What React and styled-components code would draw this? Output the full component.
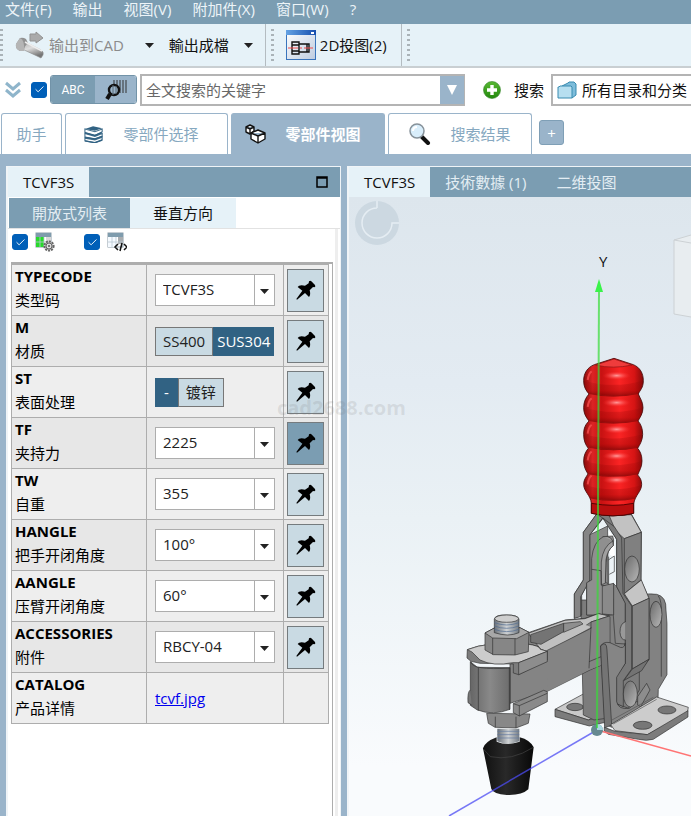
import React, { useState } from 'react';
import styled, { createGlobalStyle, css } from 'styled-components';
import { Check } from 'lucide-react';

const colors = {
  bar: '#7b9db2',
  frame: '#9ab4ca',
  pale: '#e6f2f8',
  button: '#c9dae3',
  selected: '#316283',
  line: '#adadad',
  tabText: '#86a8c0',
};

const GlobalStyle = createGlobalStyle`
  * {
    box-sizing: border-box;
  }
  body {
    margin: 0;
    background: ${colors.frame};
  }
  body, button, input, select {
    font-family: 'Open Sans', 'Noto Sans CJK SC', sans-serif;
    font-size: 15px;
    line-height: 20px;
  }
`;

const Page = styled.div`
  display: flex;
  flex-direction: column;
  min-height: 100vh;
  overflow: hidden;
  position: relative;
`;

const PlainButton = styled.button`
  display: flex;
  align-items: center;
  gap: 4px;
  border: none;
  background: none;
  padding: 0 ${props => props.$end || 0}px 0 0;
  color: ${props => props.$color || '#111'};
  white-space: nowrap;
  cursor: pointer;
`;

const MenuBar = styled.nav`
  display: flex;
  align-items: flex-start;
  gap: 21px;
  height: 24px;
  padding: 0 5px;
  background: ${colors.bar};
`;

const MenuItem = styled(PlainButton)`
  color: #edf4f8;
  line-height: 18px;
`;

const Toolbar = styled.div`
  display: flex;
  height: 44px;
  background: ${colors.pale};
  border-bottom: 2px solid #c9cfd2;
`;

const ToolGroup = styled.div`
  display: flex;
  align-items: center;
  gap: 15px;
  padding: 0 ${props => props.$end || 0}px 0 12px;
  border-right: 1px solid #b4bcc1;
`;

const Grip = styled.span`
  width: 3px;
  height: 34px;
  margin: 5px 0 0 ${props => props.$left || 0}px;
  background: repeating-linear-gradient(#aab3b8 0 2px, transparent 2px 5px);
`;

const SearchBar = styled.div`
  display: flex;
  align-items: center;
  height: 45px;
  padding: 0 0 2px 5px;
  background: #fff;
`;

const ExpandButton = styled(PlainButton)`
  margin-right: 10px;
`;

const Tick = styled.label`
  display: grid;
  place-items: center;
  position: relative;
  width: 16px;
  height: 16px;
  svg {
    position: absolute;
    pointer-events: none;
  }
`;

const TickInput = styled.input`
  appearance: none;
  width: 16px;
  height: 16px;
  margin: 0;
  border-radius: 3px;
  background: #fff;
  border: 1px solid #005fb8;
  &:checked {
    background: #005fb8;
  }
`;

const ModeSwitch = styled.div`
  display: flex;
  height: 29px;
  margin: 0 3px;
  border: 1px solid #7293a8;
  border-radius: 3px;
  overflow: hidden;
`;

const ModeButton = styled.button`
  display: grid;
  place-items: center;
  width: ${props => (props.$on ? 44 : 41)}px;
  border: none;
  padding: 0;
  background: ${props => (props.$on ? colors.bar : colors.frame)};
  color: #fff;
  font-family: Roboto, sans-serif;
  font-size: 12px;
`;

const SearchBox = styled.div`
  display: flex;
  flex: 1;
  min-width: 0;
  height: 32px;
  border: 2px solid #b4b4b4;
  border-right-width: 1px;
`;

const SearchInput = styled.input`
  flex: 1;
  min-width: 0;
  border: none;
  padding: 0 4px;
  outline: none;
  &::placeholder {
    color: #686868;
    opacity: 1;
  }
`;

const DropButton = styled.button`
  display: grid;
  place-items: center;
  width: 24px;
  border: none;
  padding: 0;
  background: ${colors.frame};
`;

const SearchActions = styled.div`
  display: flex;
  align-items: center;
  gap: 13px;
  padding: 0 7px 0 18px;
`;

const CatalogBox = styled.label`
  display: flex;
  align-items: center;
  gap: 5px;
  width: 140px;
  height: 32px;
  padding-left: 4px;
  border: 2px solid #b4b4b4;
  border-right: none;
`;

const CatalogSelect = styled.select`
  appearance: none;
  flex: 1;
  min-width: 0;
  border: none;
  background: none;
  padding: 0;
  color: #111;
`;

const MainTabs = styled.div`
  display: flex;
  gap: 3px;
  height: 41px;
  padding-left: 1px;
  background: #fff;
`;

const MainTab = styled.button`
  display: flex;
  align-items: center;
  justify-content: center;
  gap: 19px;
  width: ${props => props.$width}px;
  padding: 0 ${props => props.$end || 0}px 0 0;
  border: 1px solid ${colors.frame};
  border-bottom: none;
  border-radius: 3px 3px 0 0;
  background: ${props => (props.$active ? colors.frame : '#fff')};
  color: ${props => (props.$active ? '#fff' : colors.tabText)};
  font-weight: ${props => (props.$active ? 700 : 400)};
`;

const AddTab = styled.button`
  width: 25px;
  height: 25px;
  margin: 7px 0 0 4px;
  padding: 0;
  border: 1px solid #7f9fb6;
  border-radius: 3px;
  background: ${colors.frame};
  color: #fff;
`;

const Workspace = styled.main`
  display: flex;
  flex: 1;
  gap: 6px;
  padding: 12px 0 0 6px;
`;

const Panel = styled.section`
  display: flex;
  flex-direction: column;
  width: ${props => (props.$width ? `${props.$width}px` : 'auto')};
  flex: ${props => (props.$width ? 'none' : 1)};
  min-width: 0;
  background: #fff;
  border: solid #f0f4f7;
  border-width: 1px ${props => (props.$width ? 1 : 0)}px 0 2px;
`;

const PanelHeader = styled.header`
  display: flex;
  align-items: center;
  height: 30px;
  background: ${colors.bar};
`;

const PanelTab = styled.button`
  height: 100%;
  padding: 0 15px;
  border: none;
  background: ${props => (props.$active ? colors.pale : colors.bar)};
  color: ${props => (props.$active ? '#111' : '#e3edf3')};
  white-space: nowrap;
`;

const WindowButton = styled(PlainButton)`
  margin: 0 12px 0 auto;
`;

const ViewTabs = styled.div`
  display: flex;
  height: 32px;
  padding: 1px 0 0 1px;
  border-bottom: 1px solid #e2e2e2;
  ${PanelTab} {
    padding: 0 23px;
  }
`;

const PanelBody = styled.div`
  flex: 1;
  margin: 0 2px 0 1px;
  border-right: 3px solid #eeeeee;
`;

const Options = styled.div`
  display: flex;
  align-items: center;
  gap: 7px;
  height: 33px;
  padding: 0 3px 7px;
  svg + label {
    margin-left: 22px;
  }
`;

const TableFrame = styled.div`
  margin: 0 2px;
  min-height: calc(100% - 33px);
  border: solid #adadad;
  border-width: 2px 1px 0 0;
`;

const Table = styled.table`
  width: 318px;
  table-layout: fixed;
  border-collapse: collapse;
`;

const Row = styled.tr`
  height: 51px;
  background: ${props => (props.$shade ? '#e7e7e7' : '#eeeeee')};
`;

const cell = css`
  border: 1px solid ${colors.line};
  height: 51px;
  text-align: left;
`;

const NameCell = styled.th`
  ${cell}
  width: 135px;
  padding: 0 3px 2px;
  vertical-align: top;
  font-weight: 400;
  line-height: 24px;
`;

const Code = styled.div`
  height: 23px;
  line-height: 23px;
  font-weight: 700;
  color: #000;
`;

const ValueCell = styled.td`
  ${cell}
  width: 137px;
  padding: 0 8px;
`;

const PinCell = styled.td`
  ${cell}
  padding: 0 3px;
`;

const SelectBox = styled.div`
  display: flex;
  position: relative;
  height: 32px;
  border: 1px solid ${colors.line};
  background: #fff;
  svg {
    position: absolute;
    right: 5px;
    top: 14px;
    pointer-events: none;
  }
  &::after {
    content: '';
    position: absolute;
    right: 19px;
    height: 100%;
    border-left: 1px solid ${colors.line};
  }
`;

const Select = styled.select`
  appearance: none;
  width: 100%;
  border: none;
  background: none;
  padding: 0 22px 2px 7px;
  color: #222;
`;

const Choices = styled.div`
  display: flex;
  height: 29px;
`;

const Choice = styled.button`
  padding: 0 ${props => props.$pad}px;
  border: 1px solid ${props => (props.$on ? colors.selected : '#777')};
  background: ${props => (props.$on ? colors.selected : colors.button)};
  color: ${props => (props.$on ? '#fff' : '#222')};
  white-space: nowrap;
`;

const PinButton = styled.button`
  display: grid;
  place-items: center;
  width: 37px;
  height: 43px;
  padding: 0;
  border: 1px solid #757b7e;
  background: ${props => (props.$on ? colors.bar : colors.button)};
`;

const FileLink = styled.a`
  color: #0000ee;
`;

const Scene = styled.div`
  flex: 1;
  overflow: hidden;
  background: linear-gradient(#dde6ed, #e3ebf2 30%, #eaf1f5 52%, #f9fbfd 92%);
  svg {
    display: block;
  }
`;

const Watermark = styled.div`
  position: absolute;
  left: 277px;
  top: 396px;
  color: rgba(120, 120, 120, 0.17);
  font: 700 20px/24px 'Open Sans', sans-serif;
  pointer-events: none;
`;

const Arrow = ({ color = '#222', width = 9, height = 5 }) => (
  <svg width={width} height={height} viewBox="0 0 10 6" preserveAspectRatio="none">
    <path d="M0 0H10L5 6Z" fill={color} />
  </svg>
);

const BoltIcon = () => (
  <svg width="30" height="30" viewBox="0 0 30 30">
    <defs>
      <linearGradient id="bolt" x1="0" y1="0" x2="0.4" y2="1">
        <stop offset="0" stopColor="#aaa" />
        <stop offset="0.5" stopColor="#ddd" />
        <stop offset="1" stopColor="#777" />
      </linearGradient>
    </defs>
    <path d="M7 11L12 13L26 20Q29 22 28 25L26 28L22 26L7 19Z" fill="url(#bolt)" stroke="#888" strokeWidth="0.6" />
    <path d="M5 8Q8 7 11 9L13 13Q9 16 9 21L5 21Q0 19 1 14Z" fill="#929292" />
    <path d="M5 8Q10 10 9 21L5 21Q0 19 1 14Z" fill="#b5b5b5" />
    <path d="M10 12L27 21" stroke="#eee" strokeWidth="1.5" />
    <path d="M15 4H21V2L28 8L21 13V11H15Z" fill="#aaa" stroke="#929292" />
  </svg>
);

const DrawingIcon = () => (
  <svg width="30" height="30" viewBox="0 0 30 30">
    <defs>
      <linearGradient id="titlebar">
        <stop offset="0" stopColor="#65a3e4" />
        <stop offset="1" stopColor="#174fae" />
      </linearGradient>
      <linearGradient id="sheet" x2="1" y2="1">
        <stop offset="0" stopColor="#fff" />
        <stop offset="1" stopColor="#bdcce0" />
      </linearGradient>
    </defs>
    <rect x="0.5" y="0.5" width="29" height="29" fill="url(#sheet)" stroke="#3974bc" />
    <rect width="30" height="5" fill="url(#titlebar)" />
    <rect x="25" y="2" width="3" height="2" fill="#fff" />
    <path d="M6 12H13V24H6ZM6 15H13M6 21H13M13 14H23V22H13M21 14V22" fill="none" stroke="#111" strokeWidth="1.4" />
    <path d="M2 18H12M14 18H16M18 18H27" stroke="#f04b4b" />
  </svg>
);

const Chevrons = () => (
  <svg width="16" height="18" viewBox="0 0 16 18">
    <path d="M1 2L8 8L15 2M1 9L8 15L15 9" fill="none" stroke="#8fb5cb" strokeWidth="3" />
  </svg>
);

const BarcodeSearch = () => (
  <svg width="22" height="22" viewBox="0 0 22 22">
    <path d="M9 1V8M12 1V14M15 1V14M18 1V14M21 1V14" stroke="#333" />
    <circle cx="9" cy="11" r="5" fill={colors.frame} stroke="#111" strokeWidth="2.4" />
    <path d="M8 6V16M11 7V15" stroke="#5b6b77" />
    <path d="M5 15L2 20" stroke="#111" strokeWidth="4" />
  </svg>
);

const PlusBadge = () => (
  <svg width="18" height="18" viewBox="0 0 18 18">
    <defs>
      <linearGradient id="green" x2="0" y2="1">
        <stop offset="0" stopColor="#59b934" />
        <stop offset="1" stopColor="#22880c" />
      </linearGradient>
    </defs>
    <circle cx="9" cy="9" r="8.5" fill="url(#green)" stroke="#34842a" strokeWidth="0.6" />
    <path d="M9 4V14M4 9H14" stroke="#fff" strokeWidth="3.4" />
  </svg>
);

const FolderIcon = () => (
  <svg width="20" height="18" viewBox="0 0 20 18">
    <path d="M5 5L11 2L12 1H17L19 3V14L15 17Z" fill="#7dbcda" stroke="#398bb0" />
    <path d="M1 6H2L3 5H14L15 6V17H1Z" fill="#b7dff0" stroke="#398bb0" />
  </svg>
);

const BooksIcon = () => (
  <svg width="20" height="17" viewBox="0 0 22 18">
    <path d="M1 3L10 0L20 2L12 5Z" fill="#316283" />
    <path d="M1 3L12 6L20 3V6L12 10L1 7ZM1 8L12 11L20 8V11L12 14L1 12ZM1 13L12 15L20 12V15L12 18L1 16Z" fill="#fff" stroke="#44708d" strokeWidth="1.2" />
    <path d="M1 7L12 10L20 7M1 12L12 14L20 11M1 16L12 18L20 15" fill="none" stroke="#316283" strokeWidth="1.6" />
  </svg>
);

const CubesIcon = () => (
  <svg width="21" height="20" viewBox="0 0 21 20">
    <g fill="#fff" stroke="#111" strokeWidth="1.4" strokeLinejoin="round">
      <path d="M5 1L9 3V7L5 10L1 8V3ZM1 3L5 5L9 3M5 5V10" />
      <path d="M13 6L20 9V15L13 19L6 15V9ZM6 9L13 12L20 9M13 12V19" />
    </g>
  </svg>
);

const MagnifierIcon = () => (
  <svg width="22" height="22" viewBox="0 0 22 22">
    <path d="M13 14L19 20" stroke="#111" strokeWidth="4" strokeLinecap="round" />
    <circle cx="8" cy="8" r="7" fill="#d9eefb" stroke="#87929a" strokeWidth="1.5" />
    <path d="M4 8Q4 4 8 4" stroke="#fff" strokeWidth="2" fill="none" />
  </svg>
);

const SheetIcon = ({ code }) => (
  <svg width="20" height="20" viewBox="0 0 20 20">
    <rect x="1" y="1" width="15" height="14" fill="#fff" stroke="#8b9ba7" />
    <rect x="1" y="1" width="15" height="4" fill="#7f9cad" />
    <path d="M1 5H9V15H1Z" fill={code ? '#f5faff' : '#28d92b'} />
    <path d="M11 5H16V12H11Z" fill={code ? '#a9adb0' : '#d8d8d8'} />
    <path d="M1 10H16M5 5V15M9 5V15" stroke="#b9c7d2" strokeWidth="0.8" />
    {code ? (
      <path d="M11 12L8 15L11 18M17 12L20 15L17 18M15 11L13 19" fill="none" stroke="#111" strokeWidth="1.5" />
    ) : (
      <g>
        <circle cx="14" cy="14" r="4.6" fill="#ccc" stroke="#666" strokeWidth="2" strokeDasharray="2 1" />
        <circle cx="14" cy="14" r="3" fill="#ddd" stroke="#666" />
        <circle cx="14" cy="14" r="1" fill="#555" />
      </g>
    )}
  </svg>
);

const PinIcon = () => (
  <svg width="20" height="20" viewBox="0 0 60 60">
    <path
      d="M39 4Q43 0 46 4L57 15Q60 20 55 22L51 21L41 31Q45 44 39 51L27 39L3 59L1 57L19 32L5 21Q8 14 27 17L38 10Z"
      fill="#000"
    />
  </svg>
);

const gripShape =
  'M163 404L222 385L280 404C300 412 310 430 310 452S300 480 295 492C300 505 309 515 309 533S300 562 294 573C303 583 308 595 308 613S299 645 293 655C300 663 306 675 306 693S298 722 293 735C300 743 305 750 305 763C305 785 285 795 281 822V850Q220 865 154 850V820C152 795 131 785 131 763C131 750 137 743 144 732C137 720 131 710 131 693S137 665 145 655C137 645 131 633 131 613S137 583 147 573C137 560 131 550 131 533S137 503 147 492C137 480 131 470 131 452C131 430 142 412 163 404Z';

const ClampModel = () => {
  const metal = { stroke: '#303030', strokeWidth: 2, strokeLinejoin: 'round' };

  return (
    <svg width="342" height="619" viewBox="349 197 342 619">
      <defs>
        <linearGradient id="grip">
          <stop offset="0" stopColor="#8e0c0c" />
          <stop offset="0.15" stopColor="#dc2424" />
          <stop offset="0.3" stopColor="#c81212" />
          <stop offset="0.6" stopColor="#fb2424" />
          <stop offset="0.85" stopColor="#d61414" />
          <stop offset="1" stopColor="#850909" />
        </linearGradient>
        <linearGradient id="rib" x2="0" y2="1">
          <stop offset="0" stopColor="#700" stopOpacity="0.1" />
          <stop offset="0.6" stopColor="#900" stopOpacity="0.35" />
          <stop offset="1" stopColor="#5c0000" stopOpacity="0.65" />
        </linearGradient>
        <clipPath id="gripClip">
          <path d={gripShape} />
        </clipPath>
        <radialGradient id="shine">
          <stop offset="0" stopColor="#ff9c9c" />
          <stop offset="1" stopColor="#ff2a2a" stopOpacity="0" />
        </radialGradient>
        <linearGradient id="steel">
          <stop offset="0" stopColor="#666" />
          <stop offset="0.5" stopColor="#898989" />
          <stop offset="1" stopColor="#6c6c6c" />
        </linearGradient>
        <linearGradient id="thread">
          <stop offset="0" stopColor="#697078" />
          <stop offset="0.5" stopColor="#d0d3d5" />
          <stop offset="1" stopColor="#737b83" />
        </linearGradient>
        <linearGradient id="rivet" x2="1" y2="1">
          <stop offset="0" stopColor="#6a6a6a" />
          <stop offset="1" stopColor="#b8b8b8" />
        </linearGradient>
        <linearGradient id="rubber">
          <stop offset="0" stopColor="#101010" />
          <stop offset="0.45" stopColor="#292929" />
          <stop offset="1" stopColor="#080808" />
        </linearGradient>
      </defs>

      {/* rotation handle */}
      <circle cx="377" cy="223" r="22" fill="#ccd8e1" />
      <path d="M377 208A15 15 0 1 0 392 223H399M377 201V208" fill="none" stroke="#e5edf3" strokeWidth="1.5" />

      {/* view cube */}
      <path d="M674 240L691 235V317L674 314Z" fill="#e8edf0" />
      <path d="M691 243L674 240L691 235M674 240V314L691 317" fill="none" stroke="#ccd1d4" />

      {/* clamp body */}
      <g transform="translate(440 500) scale(0.3333)">
        <g {...metal}>
          <path d="M345 628L430 582L500 640L445 660Z" fill="#c9c9c9" />
          <path d="M345 628L445 660L500 642V666L448 678L345 650Z" fill="#7c7c7c" />
          <ellipse cx="405" cy="621" rx="25" ry="11" fill="#777" />
          <path d="M422 300H500V655L462 660L430 645Z" fill="#7c7c7c" />
          <path d="M604 288Q625 278 650 283Q680 290 678 330L681 370V524L655 568L654 600L560 650L500 650V300Z" fill="#828282" />
          <path d="M655 288Q666 300 664 350V530" fill="none" />
          <ellipse cx="648" cy="343" rx="18" ry="39" fill="url(#rivet)" />
          <path d="M430 97L470 42H574L604 96L603 240L627 295V478L598 516V570L565 625L528 610L530 532L556 492V310L530 260V118L490 54L450 104V238L425 286V345L403 355V282L430 240Z" fill="#7c7c7c" />
          <path d="M430 97L470 42L488 54L450 104V240L422 290V350L403 355V282L430 240Z" fill="#858585" />
          <path d="M450 104L503 78L505 345H440V252L450 240Z" fill="#8a8a8a" />
          <path d="M505 90L522 112L525 172L510 165Z" fill="#fff" stroke="none" />
          <path d="M455 176Q460 125 490 110L518 108Q523 118 520 137Q500 150 498 188L496 247L515 256V345H440V248L455 240Z" fill="#8f8f8f" />
          <path d="M488 110Q521 105 520 137Q502 150 498 180L496 250L484 254V212V186Q488 140 520 122" fill="#a0a0a0" />
          <path d="M455 208L483 212L484 256L518 258M505 180L523 168V215L508 223M506 170V250" fill="none" />
          <path d="M520 250L530 260L556 308V432L526 430L520 346Z" fill="#858585" />
          <path d="M487 258L521 250V345L487 342Z" fill="#8a8a8a" />
          <path d="M508 48L574 44L604 97L553 116L527 92Z" fill="#c2c2c2" />
          <path d="M553 116L604 97L603 240L553 281Z" fill="#808080" />
          <path d="M553 281L604 240L627 295L577 318Z" fill="#c5c5c5" />
          <path d="M577 318L627 295V478L577 507Z" fill="#858585" />
          <path d="M577 507L627 478L605 512L551 542Z" fill="#737373" />
          <path d="M488 54L523 80L545 114L549 280L575 318V507L550 542V620L528 610V530L556 490V310L530 260V118Z" fill="#797979" />
          <ellipse cx="576" cy="207" rx="22" ry="39" fill="url(#rivet)" />
          <path d="M557 365Q540 370 540 397Q542 421 557 420" fill="#999" />

          <path d="M265 398L376 360L435 355L475 341L510 350V485L450 510L322 574L210 610V445Z" fill="#848484" />
          <path d="M265 400L375 361L435 356L475 341L508 348L453 366L322 455L300 445Z" fill="#c0c0c0" />
          <path d="M322 455L300 445L303 433L371 397L429 372L453 381Z" fill="#c0c0c0" stroke="none" />
          <path d="M272 404L371 370V395L303 433L272 427Z" fill="#747474" />
          <path d="M371 370L421 365L429 372L371 397Z" fill="#8f8f8f" />
          <path d="M320 452L453 385V366L508 348V485L447 510L322 574Z" fill="#848484" stroke="none" />
          <path d="M320 452L453 385V366L508 348M453 381L447 505M447 485L508 460" fill="none" />

          <path d="M482 438Q490 424 510 428L534 439Q552 450 556 430V490L530 532V605Q535 630 568 625L592 603L605 624L515 682L495 672Z" fill="#858585" />
          <path d="M482 438Q500 420 501 450L515 675L494 684L484 490Z" fill="#747474" />
          <ellipse cx="571" cy="582" rx="21" ry="39" fill="url(#rivet)" />
          <path d="M602 620L630 570L620 550L593 590V615Z" fill="#8d8d8d" />
          <path d="M512 674L650 591L745 622L742 640L622 704L525 692Z" fill="#cccccc" />
          <path d="M493 682L525 694L622 704L744 632V651L640 718Q620 724 595 718L505 703L493 693Z" fill="#7c7c7c" />
          <path d="M516 660L640 592M520 672L650 598" fill="none" stroke="#555" />
          <ellipse cx="681" cy="630" rx="27" ry="12" fill="#777" />
          <ellipse cx="608" cy="676" rx="28" ry="12" fill="#777" />

          <path d="M140 640L270 642L265 670L228 684L165 682L145 670Z" fill="#888" />
          <path d="M166 650V682M228 650V684" />
          <path d="M91 485L112 502L210 503V628Q160 648 112 630L91 616Z" fill="url(#steel)" />
          <path d="M92 485Q95 512 210 504M115 503V632M208 503V630" fill="none" />
          <path d="M82 449Q140 424 260 432Q300 437 301 448L322 454V480L236 524L220 519V492L120 490L93 484L81 474Z" fill="#7c7c7c" />
          <path d="M82 449Q140 424 260 432Q300 437 301 448L322 454L236 488L218 488Q160 500 120 480L96 456Z" fill="#cccccc" />
          <path d="M236 488L322 454V485L236 524Z" fill="#8d8d8d" />
          <path d="M220 611L311 571L322 575V605L238 648L220 638Z" fill="#8a8a8a" />
          <path d="M220 611L238 617L322 580M238 617V648" fill="none" />
          <path d="M91 570Q82 575 84 608L95 615" fill="#777" />
          <path d="M135 399L165 383H240L267 397L265 455L225 465L160 464L135 450Z" fill="#868686" />
          <path d="M135 399L165 383H240L267 397L230 416L158 414Z" fill="#a8a8a8" />
          <path d="M158 414V464M225 416V465" />
          <path d="M163 358Q165 344 198 345Q235 344 237 358V398Q205 412 163 398Z" fill="url(#thread)" />
          <path d="M163 368Q200 382 237 368M163 378Q200 392 237 378M163 388Q200 402 237 388" fill="none" stroke="#506b91" />
          <ellipse cx="200" cy="356" rx="36" ry="11" fill="#cecece" />
        </g>
        <path d="M170 712V725Q203 738 239 725V712Q270 720 281 742L265 868Q245 887 200 885Q160 882 154 867L129 745Q135 725 170 712Z" fill="url(#rubber)" />
        <path d="M130 747L151 770Q215 784 280 742" fill="none" stroke="#454545" strokeWidth="2" />
        <path d="M172 686H238V724Q203 738 172 724Z" fill="url(#thread)" />
        <path d="M172 694H238M172 704H238M172 714H238" stroke="#6178a0" strokeWidth="2" />
      </g>

      {/* red grip */}
      <g transform="translate(540 230) scale(0.3333)">
        <path d={gripShape} fill="url(#grip)" stroke="#450808" strokeWidth="2.5" />
        <g clipPath="url(#gripClip)">
          {[452, 533, 613, 693, 765].map(y => (
            <g key={y}>
              <path d={`M133 ${y}Q220 ${y + 25} 307 ${y}Q305 ${y + 25} 295 ${y + 40}Q220 ${y + 55} 147 ${y + 40}Q135 ${y + 25} 133 ${y}Z`} fill="url(#rib)" />
              <ellipse cx="230" cy={y - 15} rx="42" ry="13" fill="url(#shine)" />
              <path d={`M153 ${y + 38}Q220 ${y + 54} 290 ${y + 38}`} fill="none" stroke="#a01010" strokeWidth="2" />
              <path d={`M143 ${y - 2}Q146 ${y - 23} 155 ${y - 28}`} fill="none" stroke="#ff5555" strokeWidth="6" opacity="0.7" />
            </g>
          ))}
        </g>
        <path d="M167 405L222 387L276 405Q220 418 167 405Z" fill="#ef3c3c" stroke="#811" strokeWidth="2" />
        <path d="M154 820Q220 832 281 820V850Q220 865 154 850Z" fill="#b80e0e" stroke="#400" strokeWidth="2.5" />
      </g>

      {/* axes */}
      <path d="M597 730L691 756" stroke="#ff7474" strokeWidth="1.5" />
      <path d="M597 730L449 816" stroke="#4c4cf4" strokeWidth="1.5" opacity="0.75" />
      <circle cx="597" cy="730" r="6" fill="#668991" />
      <path d="M597 724V730H603A6 6 0 0 0 597 724" fill="#a8d6de" />
      <path d="M599 291L597 728" stroke="#37dd37" strokeWidth="2" opacity="0.7" />
      <path d="M599 279L595 292H603Z" fill="#3af34a" />
      <text x="599" y="267" fontFamily="Open Sans, sans-serif" fontSize="15" fill="#111">Y</text>
    </svg>
  );
};

const rows = [
  { code: 'TYPECODE', name: '类型码', value: 'TCVF3S' },
  { code: 'M', name: '材质', choices: ['SS400', 'SUS304'], value: 'SUS304' },
  { code: 'ST', name: '表面处理', choices: ['-', '镀锌'], value: '-' },
  { code: 'TF', name: '夹持力', value: '2225', pinned: true },
  { code: 'TW', name: '自重', value: '355' },
  { code: 'HANGLE', name: '把手开闭角度', value: '100°' },
  { code: 'AANGLE', name: '压臂开闭角度', value: '60°' },
  { code: 'ACCESSORIES', name: '附件', value: 'RBCY-04' },
  { code: 'CATALOG', name: '产品详情', link: 'tcvf.jpg' },
];

const choicePads = { SS400: 7, SUS304: 3, '-': 8, 镀锌: 7 };

const CheckBox = ({ label }) => (
  <Tick>
    <TickInput type="checkbox" defaultChecked aria-label={label} />
    <Check size={11} color="#fff" strokeWidth={2} />
  </Tick>
);

const ParameterRow = ({ row, shade }) => {
  const [value, setValue] = useState(row.value);
  const [pinned, setPinned] = useState(Boolean(row.pinned));

  return (
    <Row $shade={shade}>
      <NameCell scope="row">
        <Code>{row.code}</Code>
        {row.name}
      </NameCell>
      <ValueCell>
        {row.link && <FileLink href="#catalog">{row.link}</FileLink>}
        {row.choices && (
          <Choices>
            {row.choices.map(choice => (
              <Choice
                key={choice}
                type="button"
                $on={choice === value}
                $pad={choicePads[choice]}
                onClick={() => setValue(choice)}
              >
                {choice}
              </Choice>
            ))}
          </Choices>
        )}
        {!row.link && !row.choices && (
          <SelectBox>
            <Select aria-label={row.code} defaultValue={row.value}>
              <option>{row.value}</option>
            </Select>
            <Arrow />
          </SelectBox>
        )}
      </ValueCell>
      <PinCell>
        {!row.link && (
          <PinButton type="button" aria-label={`${row.code} pin`} $on={pinned} onClick={() => setPinned(!pinned)}>
            <PinIcon />
          </PinButton>
        )}
      </PinCell>
    </Row>
  );
};

const App = () => (
  <Page>
    <GlobalStyle />
    <MenuBar>
      {['文件(F)', '输出', '视图(V)', '附加件(X)', '窗口(W)', '?'].map(item => (
        <MenuItem key={item} type="button">{item}</MenuItem>
      ))}
    </MenuBar>

    <Toolbar>
      <Grip />
      <ToolGroup $end={12}>
        <PlainButton type="button" $color="#8b8b8b" $end={6}>
          <BoltIcon />
          输出到CAD
        </PlainButton>
        <Arrow />
        <PlainButton type="button">輸出成檔</PlainButton>
        <Arrow />
      </ToolGroup>
      <Grip $left={5} />
      <ToolGroup $end={14}>
        <PlainButton type="button">
          <DrawingIcon />
          2D投图(2)
        </PlainButton>
      </ToolGroup>
      <Grip $left={5} />
    </Toolbar>

    <SearchBar>
      <ExpandButton type="button" aria-label="expand"><Chevrons /></ExpandButton>
      <CheckBox label="ABC" />
      <ModeSwitch>
        <ModeButton type="button" $on>ABC</ModeButton>
        <ModeButton type="button" aria-label="barcode"><BarcodeSearch /></ModeButton>
      </ModeSwitch>
      <SearchBox>
        <SearchInput aria-label="search" placeholder="全文搜索的关键字" />
        <DropButton type="button" aria-label="history"><Arrow color="#fff" width={10} height={10} /></DropButton>
      </SearchBox>
      <SearchActions>
        <PlusBadge />
        <PlainButton type="button">搜索</PlainButton>
      </SearchActions>
      <CatalogBox>
        <FolderIcon />
        <CatalogSelect>
          <option>所有目录和分类</option>
        </CatalogSelect>
      </CatalogBox>
    </SearchBar>

    <MainTabs>
      <MainTab type="button" $width={61}>助手</MainTab>
      <MainTab type="button" $width={163} $end={10}><BooksIcon />零部件选择</MainTab>
      <MainTab type="button" $width={154} $end={10} $active><CubesIcon />零部件视图</MainTab>
      <MainTab type="button" $width={144}><MagnifierIcon />搜索结果</MainTab>
      <AddTab type="button">+</AddTab>
    </MainTabs>

    <Workspace>
      <Panel $width={335}>
        <PanelHeader>
          <PanelTab type="button" $active>TCVF3S</PanelTab>
          <WindowButton type="button" aria-label="maximize">
            <svg width="12" height="12">
              <path d="M1 1H11V11H1ZM1 2H11" fill="none" stroke="#000" strokeWidth="1.5" />
            </svg>
          </WindowButton>
        </PanelHeader>
        <ViewTabs>
          <PanelTab type="button">開放式列表</PanelTab>
          <PanelTab type="button" $active>垂直方向</PanelTab>
        </ViewTabs>
        <PanelBody>
          <Options>
            <CheckBox label="settings" />
            <SheetIcon />
            <CheckBox label="code" />
            <SheetIcon code />
          </Options>
          <TableFrame>
            <Table>
              <tbody>
                {rows.map((row, index) => (
                  <ParameterRow key={row.code} row={row} shade={index % 2 === 1} />
                ))}
              </tbody>
            </Table>
          </TableFrame>
        </PanelBody>
      </Panel>

      <Panel>
        <PanelHeader>
          <PanelTab type="button" $active>TCVF3S</PanelTab>
          <PanelTab type="button">技術數據 (1)</PanelTab>
          <PanelTab type="button">二维投图</PanelTab>
        </PanelHeader>
        <Scene>
          <ClampModel />
        </Scene>
      </Panel>
    </Workspace>
    <Watermark>cad2688.com</Watermark>
  </Page>
);

export default App;
